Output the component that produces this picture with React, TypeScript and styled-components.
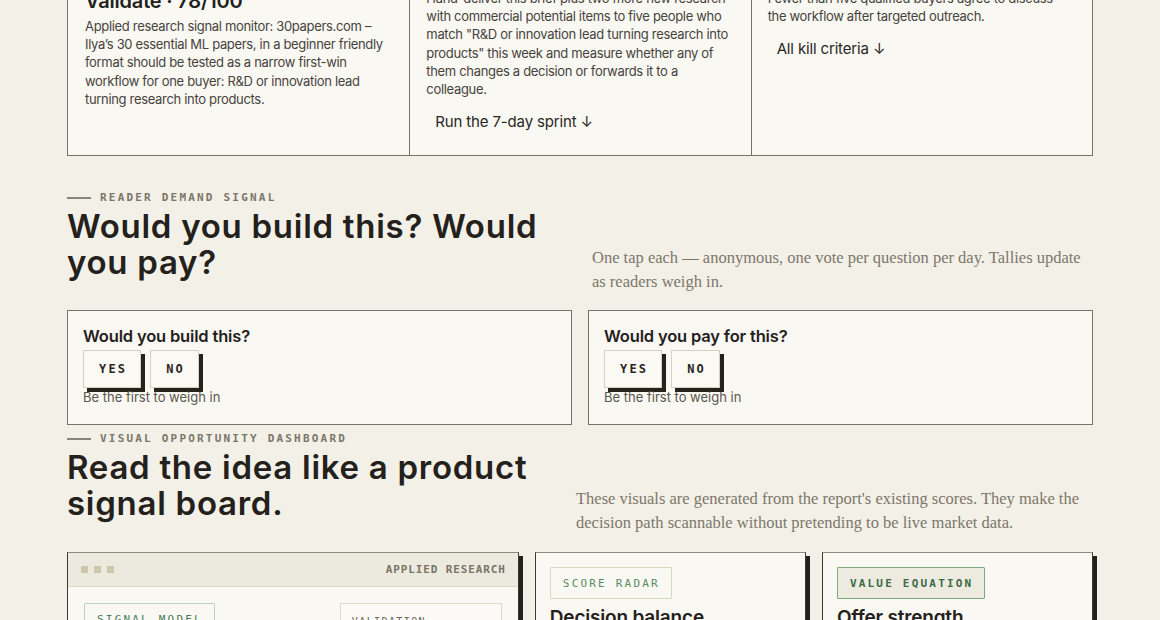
import React from "react";
import styled, { createGlobalStyle } from "styled-components";

const GlobalStyle = createGlobalStyle`
  * { box-sizing: border-box; }
  html, body {
    margin: 0;
    padding: 0;
    background: #f3f0e8;
  }
  body {
    font-family: Inter, "Noto Sans", sans-serif;
    color: #24211c;
    overflow: hidden;
    -webkit-font-smoothing: antialiased;
  }
`;

const mono = `"DejaVu Sans Mono", "Liberation Mono", monospace`;
const serif = `"Liberation Serif", "DejaVu Serif", serif`;

const Page = styled.main`
  width: 1026px;
  margin: 0 auto;
  display: flex;
  flex-direction: column;
  padding-bottom: 80px;
`;

/* ---------- verdict summary strip ---------- */

const Summary = styled.section`
  margin-top: -53px;
  display: grid;
  grid-template-columns: repeat(3, 1fr);
  border: 1px solid #77736a;
  background: #f9f8f3;
`;

const SummaryCell = styled.div`
  padding: 17px 22px 14px 17px;
  display: flex;
  flex-direction: column;
  align-items: flex-start;
  & + & {
    border-left: 1px solid #77736a;
    padding-left: 16px;
  }
`;

const CellLabel = styled.div`
  font-family: ${mono};
  font-size: 10px;
  font-weight: 700;
  letter-spacing: 0.18em;
  line-height: 16px;
  color: #7c7669;
  margin-bottom: 8px;
`;

const CellTitle = styled.h3`
  margin: 0 0 4px;
  font-size: 20px;
  line-height: 24px;
  font-weight: 600;
  letter-spacing: -0.01em;
  color: #24211c;
`;

const CellBody = styled.p`
  margin: 0;
  font-size: 13px;
  line-height: 18.2px;
  color: #47433b;
  letter-spacing: -0.025em;
`;

const JumpLink = styled.a`
  margin-top: 5px;
  padding: 8px;
  border: 1px solid transparent;
  font-size: 15px;
  line-height: 20px;
  color: #2b2722;
  text-decoration: none;
  letter-spacing: -0.01em;
  cursor: pointer;
`;

/* ---------- section headers ---------- */

const Section = styled.section<{ $gap: number }>`
  margin-top: ${(p) => p.$gap}px;
  display: flex;
  flex-direction: column;
`;

const Eyebrow = styled.div`
  display: flex;
  align-items: center;
  gap: 9px;
  font-family: ${mono};
  font-size: 11px;
  font-weight: 700;
  letter-spacing: 0.2em;
  line-height: 16px;
  color: #7c7669;
  text-transform: uppercase;
  &::before {
    content: "";
    width: 24px;
    height: 1.5px;
    background: #8a8477;
  }
`;

const HeadRow = styled.div`
  display: flex;
  justify-content: space-between;
  align-items: flex-end;
`;

const Heading = styled.h2`
  margin: 2px 0 14px;
  width: 500px;
  flex-shrink: 0;
  font-size: 33px;
  line-height: 36px;
  font-weight: 600;
  letter-spacing: 0.022em;
  color: #24211c;
`;

const Lede = styled.p<{ $width: number }>`
  margin: 0;
  width: ${(p) => p.$width}px;
  flex-shrink: 0;
  font-family: ${serif};
  font-size: 16.5px;
  line-height: 24px;
  color: #7d776a;
`;

/* ---------- reader vote ---------- */

const VoteGrid = styled.div`
  margin-top: 16px;
  display: grid;
  grid-template-columns: 1fr 1fr;
  gap: 16px;
`;

const VoteCard = styled.div`
  border: 1px solid #77736a;
  background: #f9f8f3;
  padding: 14px 15px 18px;
  display: flex;
  flex-direction: column;
  align-items: flex-start;
`;

const VoteQuestion = styled.h4`
  margin: 0 0 3px;
  font-size: 16.5px;
  line-height: 22px;
  font-weight: 600;
  letter-spacing: -0.01em;
  color: #24211c;
`;

const VoteButtons = styled.div`
  display: flex;
  gap: 9px;
`;

const VoteButton = styled.button`
  height: 38px;
  padding: 0 13px 0 15px;
  border: 1px solid #d6d0c0;
  background: #faf9f4;
  box-shadow: 4px 4px 0 #26221c;
  font-family: ${mono};
  font-size: 12px;
  font-weight: 700;
  letter-spacing: 0.18em;
  color: #2a2620;
  cursor: pointer;
`;

const VoteHint = styled.div`
  font-size: 13px;
  line-height: 18px;
  color: #5b564c;
`;

/* ---------- dashboard ---------- */

const DashGrid = styled.div`
  margin-top: 17px;
  display: grid;
  grid-template-columns: 5fr 3fr 3fr;
  gap: 16px;
`;

const DashCard = styled.article`
  min-height: 280px;
  border: 1px solid #3d3932;
  border-top-color: #8f8b80;
  background: #f9f8f3;
  box-shadow: 4px 4px 0 #24211c;
  display: flex;
  flex-direction: column;
`;

const WindowBar = styled.div`
  height: 34px;
  padding: 0 12px 0 13px;
  background: #ece9de;
  border-bottom: 1px solid #ddd7c7;
  display: flex;
  align-items: center;
  justify-content: space-between;
`;

const WindowDots = styled.div`
  display: flex;
  gap: 6px;
`;

const WindowDot = styled.span`
  width: 7px;
  height: 7px;
  background: #cfc6ae;
`;

const WindowLabel = styled.span`
  font-family: ${mono};
  font-size: 11px;
  font-weight: 700;
  letter-spacing: 0.08em;
  color: #7a7466;
`;

const SignalBody = styled.div`
  padding: 16px;
  display: flex;
  justify-content: space-between;
  align-items: flex-start;
`;

const Tag = styled.span<{ $tone: "outline" | "soft" | "strong" }>`
  display: inline-flex;
  align-items: center;
  height: 32px;
  padding: 0 11px 0 12px;
  font-family: ${mono};
  font-size: 11px;
  letter-spacing: 0.2em;
  border: 1px solid
    ${(p) =>
      p.$tone === "strong" ? "#7ba77f" : p.$tone === "soft" ? "#d3dbbf" : "#bcd3c2"};
  background: ${(p) => (p.$tone === "strong" ? "#edeae0" : "transparent")};
  color: ${(p) => (p.$tone === "strong" ? "#3c6b46" : p.$tone === "soft" ? "#5a8a62" : "#4b7d58")};
  font-weight: ${(p) => (p.$tone === "strong" ? 700 : 400)};
  border-radius: 1px;
`;

const StatBox = styled.div`
  width: 162px;
  min-height: 110px;
  padding: 12px 11px;
  border: 1px solid #e0dbc9;
  background: #fbfaf6;
  font-family: ${mono};
  font-size: 10px;
  letter-spacing: 0.14em;
  color: #6d675b;
`;

const PanelBody = styled.div`
  padding: 14px 14px 16px;
  display: flex;
  flex-direction: column;
  align-items: flex-start;
`;

const PanelTitle = styled.h4`
  margin: 7px 0 0;
  font-size: 19px;
  line-height: 24px;
  font-weight: 600;
  letter-spacing: -0.01em;
  color: #24211c;
`;

const votes = ["Would you build this?", "Would you pay for this?"];

export default function App() {
  return (
    <>
      <GlobalStyle />
      <Page>
        <Summary>
          <SummaryCell>
            <CellLabel>VERDICT</CellLabel>
            <CellTitle>Validate · 78/100</CellTitle>
            <CellBody>
              Applied research signal monitor: 30papers.com – Ilya’s 30 essential ML papers, in a beginner
              friendly format should be tested as a narrow first-win workflow for one buyer: R&amp;D or
              innovation lead turning research into products.
            </CellBody>
          </SummaryCell>
          <SummaryCell>
            <CellLabel>FIRST TEST</CellLabel>
            <CellBody>
              Hand-deliver this brief plus two more new research with commercial potential items to five
              people who match "R&amp;D or innovation lead turning research into products" this week and
              measure whether any of them changes a decision or forwards it to a colleague.
            </CellBody>
            <JumpLink>Run the 7-day sprint ↓</JumpLink>
          </SummaryCell>
          <SummaryCell>
            <CellLabel>KILL SIGNAL</CellLabel>
            <CellBody>
              Fewer than five qualified buyers agree to discuss the workflow after targeted outreach.
            </CellBody>
            <JumpLink>All kill criteria ↓</JumpLink>
          </SummaryCell>
        </Summary>

        <Section $gap={34}>
          <Eyebrow>Reader demand signal</Eyebrow>
          <HeadRow>
            <Heading>Would you build this? Would you pay?</Heading>
            <Lede $width={501}>
              One tap each — anonymous, one vote per question per day. Tallies update as readers weigh in.
            </Lede>
          </HeadRow>
          <VoteGrid>
            {votes.map((q) => (
              <VoteCard key={q}>
                <VoteQuestion>{q}</VoteQuestion>
                <VoteButtons>
                  <VoteButton>YES</VoteButton>
                  <VoteButton>NO</VoteButton>
                </VoteButtons>
                <VoteHint>Be the first to weigh in</VoteHint>
              </VoteCard>
            ))}
          </VoteGrid>
        </Section>

        <Section $gap={6}>
          <Eyebrow>Visual opportunity dashboard</Eyebrow>
          <HeadRow>
            <Heading>Read the idea like a product signal board.</Heading>
            <Lede $width={517}>
              These visuals are generated from the report's existing scores. They make the decision path
              scannable without pretending to be live market data.
            </Lede>
          </HeadRow>
          <DashGrid>
            <DashCard>
              <WindowBar>
                <WindowDots>
                  <WindowDot />
                  <WindowDot />
                  <WindowDot />
                </WindowDots>
                <WindowLabel>APPLIED RESEARCH</WindowLabel>
              </WindowBar>
              <SignalBody>
                <Tag $tone="outline">SIGNAL MODEL</Tag>
                <StatBox>VALIDATION</StatBox>
              </SignalBody>
            </DashCard>
            <DashCard>
              <PanelBody>
                <Tag $tone="soft">SCORE RADAR</Tag>
                <PanelTitle>Decision balance</PanelTitle>
              </PanelBody>
            </DashCard>
            <DashCard>
              <PanelBody>
                <Tag $tone="strong">VALUE EQUATION</Tag>
                <PanelTitle>Offer strength</PanelTitle>
              </PanelBody>
            </DashCard>
          </DashGrid>
        </Section>
      </Page>
    </>
  );
}
